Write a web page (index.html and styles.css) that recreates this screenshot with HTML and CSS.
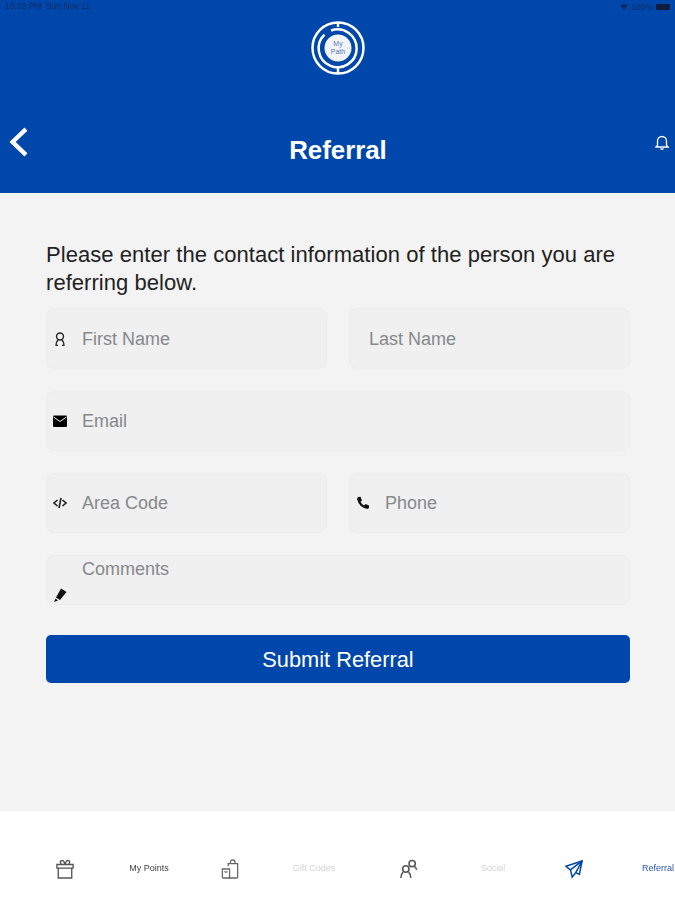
FILE: index.html
```html
<!DOCTYPE html>
<html lang="en">
<head>
  <meta charset="UTF-8">
  <meta name="viewport" content="width=device-width, initial-scale=1.0">
  <title>Referral</title>
  <link rel="stylesheet" href="styles.css">
</head>
<body>

  <!-- Blue header with status bar, logo and title -->
  <header class="header">
    <div class="status-bar">
      <span>10:02 PM &nbsp;Sun Nov 11</span>
      <span class="status-right">
        <svg class="wifi" viewBox="0 0 10 8"><path d="M0 2 Q5 -1.500 10 2 L5 8 Z" fill="#14295f"/></svg>
        100%
        <span class="battery"></span>
      </span>
    </div>

    <div class="logo-row">
      <svg class="logo" viewBox="0 0 54 54" fill="none" stroke="#fff">
        <circle cx="27" cy="27" r="25.500" stroke-width="2.500"/>
        <path d="M27 1V6M27 45V53" stroke-width="2.400"/>
        <path d="M15 12.500A19 19 0 1 1 10 18.500" stroke-width="2.500" transform="rotate(18 27 27)"/>
        <circle cx="27" cy="27" r="13.500" fill="#f1f4fa" stroke="none"/>
        <text class="logo-text" x="27" y="25" text-anchor="middle">My</text>
        <text class="logo-text" x="27" y="33" text-anchor="middle">Path</text>
      </svg>
    </div>

    <div class="title-row">
      <svg class="back" viewBox="0 0 18 28" fill="none" stroke="#fff" stroke-width="4"><path d="M15.500 2L3 14L15.500 26"/></svg>
      <h1>Referral</h1>
      <svg class="bell" viewBox="0 0 14 16" fill="none" stroke="#fff" stroke-width="1.300"><path d="M2.500 11.500V7A4.500 4.500 0 0 1 11.500 7V11.500L13 13H1Z"/><path d="M5.500 14.500Q7 16 8.500 14.500"/></svg>
    </div>
  </header>

  <main class="content">
    <p class="intro">Please enter the contact information of the person you are referring below.</p>

    <form class="referral-form">
      <div class="row row-first">
        <label class="field">
          <svg class="icon" viewBox="0 0 14 14" fill="none" stroke="#222" stroke-width="1.400"><circle cx="7" cy="4.500" r="3.500"/><path d="M3 13.500Q3 10 5 8M11 13.500Q11 10 9 8M2.500 13.500H5M9 13.500H11.500"/></svg>
          <input type="text" placeholder="First Name">
        </label>
        <label class="field no-icon">
          <input type="text" placeholder="Last Name">
        </label>
      </div>

      <div class="row">
        <label class="field">
          <svg class="icon" viewBox="0 0 14 14"><path d="M1 1.500H13Q14 1.500 14 2.500V12Q14 13 13 13H1Q0 13 0 12V2.500Q0 1.500 1 1.500Z" fill="#000"/><path d="M0.500 3L7 7.500L13.500 3" fill="none" stroke="#f0f0f0" stroke-width="1"/></svg>
          <input type="email" placeholder="Email">
        </label>
      </div>

      <div class="row">
        <label class="field">
          <svg class="icon" viewBox="0 0 14 14" fill="none" stroke="#222" stroke-width="1.600"><path d="M4.500 4L1 7L4.500 10M9.500 4L13 7L9.500 10M8 2L6 12"/></svg>
          <input type="text" placeholder="Area Code">
        </label>
        <label class="field">
          <svg class="icon" viewBox="0 0 14 14"><path d="M2 1L4.500 .8L6 4.500L4.500 5.800Q5.500 8 8 9.500L9.500 8L13 9.500V12L11.500 13Q3 11.500 1 3Z" fill="#111"/></svg>
          <input type="tel" placeholder="Phone">
        </label>
      </div>

      <div class="row">
        <label class="field field-comments">
          <svg class="icon" viewBox="0 0 14 14"><path d="M8 .5L13.500 4L7 12L3 9.500Z" fill="#111"/><path d="M2.500 10.500L5 12.500L1 14Z" fill="#111"/></svg>
          <textarea placeholder="Comments"></textarea>
        </label>
      </div>

      <button type="button" class="submit">Submit Referral</button>
    </form>
  </main>

  <!-- Bottom tabs -->
  <nav class="tabs">
    <a class="tab">
      <svg class="tab-icon" viewBox="0 0 20 22" fill="none" stroke="#555" stroke-width="1.500"><path d="M1 6H19V10H1ZM2.500 10V21H17.500V10M6 6Q3 1.500 7 1.500Q9 2 10 6Q11 2 13 1.500Q17 1.500 14 6"/></svg>
      <span class="tab-label active-dark">My Points</span>
    </a>
    <a class="tab">
      <svg class="tab-icon" viewBox="0 0 20 22" fill="none" stroke="#666" stroke-width="1.400"><path d="M8 8V5H18.500V20Q18.500 21 17.500 21H9M10.500 5V3Q10.500 1 13 1Q15.500 1 15.500 3V5"/><path d="M1.500 11H9.500V21H2.500Q1.500 21 1.500 20ZM4 13.500Q5.500 16 7 13.500"/></svg>
      <span class="tab-label">Gift Codes</span>
    </a>
    <a class="tab">
      <svg class="tab-icon" viewBox="0 0 20 22" fill="none" stroke="#555" stroke-width="1.700"><circle cx="6.500" cy="11" r="3.500"/><path d="M1 21Q1 16.500 3.500 14.500M12 21Q12 16.500 9.500 14.500"/><circle cx="13.500" cy="5" r="3.500"/><path d="M16 8Q18 9.500 18.500 12"/></svg>
      <span class="tab-label">Social</span>
    </a>
    <a class="tab">
      <svg class="tab-icon" viewBox="0 0 20 22" fill="none" stroke="#0047ab" stroke-width="1.700"><path d="M19 2L1 8L6 12L8 20L12 15L16 17Z" /><path d="M19 2L6 12M19 2L12 15"/></svg>
      <span class="tab-label active">Referral</span>
    </a>
  </nav>

</body>
</html>
```

FILE: styles.css
```css
* {
  box-sizing: border-box;
}
body {
  margin: 0;
  height: 900px;
  display: flex;
  flex-direction: column;
  background-color: #f3f3f3;
  font-family: "Liberation Sans", Arial, sans-serif;
  color: #111;
  overflow: hidden;
}
/* Header */
.header {
  height: 193px;
  background-color: #0047ab;
  color: #fff;
  display: flex;
  flex-direction: column;
}
.status-bar {
  display: flex;
  justify-content: space-between;
  padding: 1px 5px 0 5px;
  height: 13px;
  font-size: 8.500px;
  line-height: 11px;
  color: #14295f;
  filter: blur(0.4px);
}
.status-right {
  display: flex;
  align-items: center;
  gap: 3px;
}
.wifi {
  width: 8px;
  height: 6px;
}
.battery {
  width: 14px;
  height: 6px;
  background-color: #101c3d;
  border-radius: 1px;
}
.logo-row {
  display: flex;
  justify-content: center;
  padding-top: 8px;
}
.logo {
  width: 54px;
  height: 54px;
}
.logo-text {
  font-size: 7px;
  fill: #5c78b4;
  stroke: none;
}
.title-row {
  display: grid;
  grid-template-columns: 1fr auto 1fr;
  align-items: center;
  margin-top: 52px;
  padding: 0 8px 0 9px;
  height: 46px;
}
.title-row h1 {
  margin: 0;
  font-size: 25.800px;
  font-weight: bold;
}
.back {
  width: 20px;
  height: 30px;
  margin-top: -16px;
}
.bell {
  width: 14px;
  height: 16px;
  margin-top: -16px;
  margin-right: -2px;
  justify-self: end;
}
/* Form */
.content {
  flex: 1;
  padding: 48px 45px 0 46px;
}
.intro {
  margin: 0 0 11px;
  font-size: 22px;
  letter-spacing: 0.05px;
  line-height: 28px;
  color: #222;
}
.referral-form {
  display: flex;
  flex-direction: column;
  gap: 22px;
}
.row {
  display: grid;
  grid-auto-flow: column;
  grid-auto-columns: 1fr;
  gap: 22px;
}
.row-first .field {
  height: 61px;
}
.field {
  height: 60px;
  display: flex;
  align-items: center;
  gap: 15px;
  padding-left: 6px;
  background-color: #f0f0f0;
  border: 1px solid #ececec;
  border-radius: 8px;
}
.no-icon {
  padding-left: 19px;
}
.icon {
  width: 14px;
  height: 14px;
  flex-shrink: 0;
}
.field input,
.field textarea {
  flex: 1;
  min-width: 0;
  padding: 1px 0 0;
  border: none;
  outline: none;
  background: transparent;
  resize: none;
  font-family: inherit;
  font-size: 18px;
  color: #111;
}
.field input::placeholder,
.field textarea::placeholder {
  color: #85898c;
  opacity: 1;
}
.field-comments {
  height: 50px;
  align-items: flex-end;
  padding-bottom: 2px;
}
.field-comments textarea {
  align-self: flex-start;
  height: 28px;
  line-height: 25px;
}
.submit {
  height: 48px;
  margin-top: 8px;
  padding-top: 2px;
  border: none;
  border-radius: 5px;
  background-color: #0047ab;
  color: #fff;
  font-family: inherit;
  font-size: 21.800px;
}
/* Tabs */
.tabs {
  height: 89px;
  background-color: #fff;
  display: grid;
  grid-template-columns: 165px 179px 165px 1fr;
  padding-left: 56px;
  padding-top: 48px;
}
.tab {
  display: flex;
  align-items: flex-start;
  gap: 45px;
}
.tab-icon {
  width: 18px;
  height: 20px;
  flex-shrink: 0;
}
.tab-label {
  width: 60px;
  text-align: center;
  margin-top: 3px;
  font-size: 9px;
  line-height: 12px;
  white-space: nowrap;
  color: #d4d4d4;
  filter: blur(0.5px);
}
.tab-label.active-dark {
  color: #444;
}
.tab-label.active {
  color: #2b56a8;
}
```
